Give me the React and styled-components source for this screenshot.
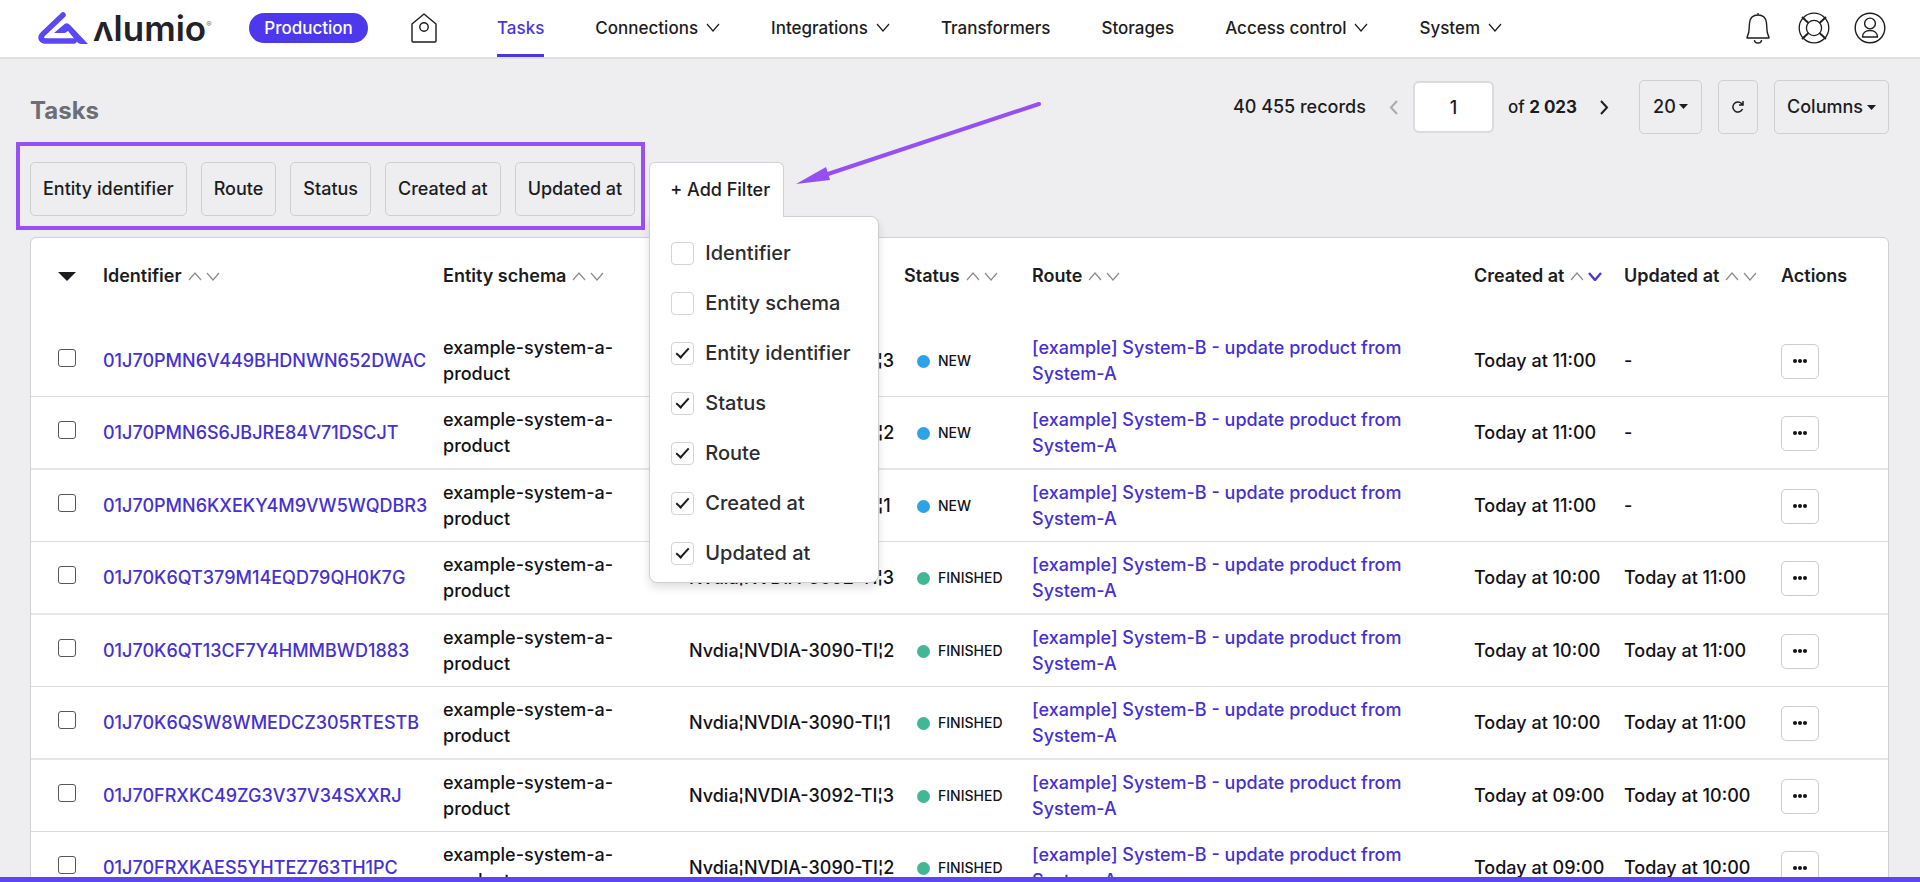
import React from 'react';
import styled, { createGlobalStyle } from 'styled-components';

const GlobalStyle = createGlobalStyle`
  *, *::before, *::after {
    box-sizing: border-box;
  }

  body {
    margin: 0;
    background: #eeeef1;
    color: #1c1c21;
    font-family: Inter, "Liberation Sans", sans-serif;
    font-size: 18px;
    font-weight: 500;
    line-height: 26px;
  }

  button, input, select {
    font: inherit;
    color: inherit;
  }

  a {
    color: #4531d0;
    text-decoration: none;
  }
`;

const navItems = [
  { label: 'Tasks', active: true },
  { label: 'Connections', menu: true },
  { label: 'Integrations', menu: true },
  { label: 'Transformers' },
  { label: 'Storages' },
  { label: 'Access control', menu: true },
  { label: 'System', menu: true },
];

const activeFilters = ['Entity identifier', 'Route', 'Status', 'Created at', 'Updated at'];

const filterOptions = [
  { label: 'Identifier', checked: false },
  { label: 'Entity schema', checked: false },
  { label: 'Entity identifier', checked: true },
  { label: 'Status', checked: true },
  { label: 'Route', checked: true },
  { label: 'Created at', checked: true },
  { label: 'Updated at', checked: true },
];

const columns = [
  { label: 'Identifier', width: 340 },
  { label: 'Entity schema', width: 246 },
  { label: 'Entity identifier', width: 215 },
  { label: 'Status', width: 128 },
  { label: 'Route' },
  { label: 'Created at', width: 150, sorted: 'desc' },
  { label: 'Updated at', width: 157 },
];

const tasks = [
  { id: '01J70PMN6V449BHDNWN652DWAC', entity: 'Nvdia¦NVDIA-3092-TI¦3', status: 'NEW', created: '11:00' },
  { id: '01J70PMN6S6JBJRE84V71DSCJT', entity: 'Nvdia¦NVDIA-3090-TI¦2', status: 'NEW', created: '11:00' },
  { id: '01J70PMN6KXEKY4M9VW5WQDBR3', entity: 'Nvdia¦NVDIA-3090-TI¦1', status: 'NEW', created: '11:00' },
  { id: '01J70K6QT379M14EQD79QH0K7G', entity: 'Nvdia¦NVDIA-3092-TI¦3', status: 'FINISHED', created: '10:00', updated: '11:00' },
  { id: '01J70K6QT13CF7Y4HMMBWD1883', entity: 'Nvdia¦NVDIA-3090-TI¦2', status: 'FINISHED', created: '10:00', updated: '11:00' },
  { id: '01J70K6QSW8WMEDCZ305RTESTB', entity: 'Nvdia¦NVDIA-3090-TI¦1', status: 'FINISHED', created: '10:00', updated: '11:00' },
  { id: '01J70FRXKC49ZG3V37V34SXXRJ', entity: 'Nvdia¦NVDIA-3092-TI¦3', status: 'FINISHED', created: '09:00', updated: '10:00' },
  { id: '01J70FRXKAES5YHTEZ763TH1PC', entity: 'Nvdia¦NVDIA-3090-TI¦2', status: 'FINISHED', created: '09:00', updated: '10:00' },
];

const Page = styled.div`
  height: 100vh;
  overflow: hidden;
`;

const Header = styled.header`
  display: flex;
  align-items: center;
  height: 59px;
  padding: 0 34px 2px 38px;
  background: #fff;
  border-bottom: 2px solid #e0e0e3;
  font-size: 17px;
`;

const Brand = styled.a`
  display: flex;
  align-items: center;
  gap: 5px;
  width: 211px;
  color: #232227;
`;

const Wordmark = styled.span`
  font-size: 35px;
  font-weight: 600;
  line-height: 34px;

  sup {
    font-size: 8px;
    line-height: 8px;
    vertical-align: 14px;
    color: #77777c;
  }
`;

const Environment = styled.span`
  width: 119px;
  border-radius: 15px;
  background: #4d38ee;
  color: #fff;
  text-align: center;
  line-height: 30px;
`;

const HomeLink = styled.a`
  display: flex;
  margin: 0 60px 0 43px;
`;

const Nav = styled.nav`
  display: flex;
  gap: 51px;
  align-self: stretch;
`;

const NavLink = styled.a`
  display: flex;
  align-items: center;
  gap: 8px;
  margin-bottom: -2px;
  padding-bottom: 2px;
  color: ${({ $active }) => ($active ? '#4a37dc' : '#1c1c21')};
  box-shadow: ${({ $active }) => ($active ? 'inset 0 -3px #4a37dc' : 'none')};
  white-space: nowrap;
`;

const HeaderTools = styled.div`
  display: flex;
  align-items: center;
  gap: 24px;
  margin-left: auto;
`;

const IconButton = styled.button`
  display: flex;
  padding: 0;
  border: 0;
  background: none;
`;

const Main = styled.main`
  padding: 21px 31px 0 30px;
`;

const TitleRow = styled.div`
  display: flex;
  justify-content: space-between;
  align-items: flex-start;
  height: 82px;
`;

const Title = styled.h1`
  margin: 16px 0 0;
  color: #6b6e74;
  font-size: 24px;
  font-weight: 700;
  line-height: 30px;
`;

const Pager = styled.div`
  display: flex;
  align-items: center;
`;

const PageCount = styled.span`
  font-size: 17px;
`;

const PageStep = styled(IconButton)`
  margin: 0 ${({ $after }) => $after}px 0 ${({ $before }) => $before}px;
  color: ${({ disabled }) => (disabled ? '#a9a9ae' : '#1c1c21')};
`;

const PageInput = styled.input`
  width: 81px;
  height: 52px;
  margin-right: 14px;
  border: 2px solid #dbdbde;
  border-radius: 6px;
  background: #fff;
  text-align: center;
`;

const OutlineButton = styled.button`
  display: flex;
  align-items: center;
  justify-content: center;
  gap: 4px;
  height: 54px;
  padding: 0 12px;
  border: 1px solid #cfcfd3;
  border-radius: 5px;
  background: none;
  white-space: nowrap;
`;

const RefreshButton = styled(OutlineButton)`
  width: 40px;
  margin: 0 16px;
  padding: 0;
`;

const PageSize = styled.div`
  position: relative;

  select {
    display: block;
    width: 63px;
    height: 54px;
    padding: 0 13px;
    border: 1px solid #cfcfd3;
    border-radius: 5px;
    background: none;
    appearance: none;
  }

  svg {
    position: absolute;
    right: 14px;
    top: 24px;
    pointer-events: none;
  }
`;

const FilterBar = styled.div`
  display: flex;
  gap: 14px;
  height: 75px;
`;

const FilterGroup = styled.div`
  position: relative;
  display: flex;
  align-self: flex-start;
  gap: 14px;

  &::before {
    content: '';
    position: absolute;
    inset: -20px -10px -14px -14px;
    border: 4px solid #9650f5;
    pointer-events: none;
  }
`;

const AddFilter = styled.div`
  position: relative;
  z-index: 1;
  align-self: flex-start;
`;

const AddFilterButton = styled.button`
  position: relative;
  z-index: 1;
  display: block;
  height: 55px;
  padding: 0 13px 0 20px;
  border: 1px solid #d2d2d6;
  border-bottom: 0;
  border-radius: 6px 6px 0 0;
  background: #fff;
  white-space: nowrap;
`;

const FilterMenu = styled.div`
  position: absolute;
  top: 54px;
  left: 0;
  display: grid;
  gap: 24px;
  width: 230px;
  padding: 23px 21px 16px;
  border: 1px solid #cfcfd3;
  border-radius: 0 8px 8px 8px;
  background: #fff;
  box-shadow: 0 5px 8px rgba(0, 0, 0, 0.12);
`;

const FilterOption = styled.label`
  display: flex;
  align-items: center;
  gap: 11px;
  color: #2c2c31;
  font-size: 20px;
  white-space: nowrap;
`;

const OptionBox = styled.input`
  display: grid;
  place-items: center;
  flex: none;
  width: 23px;
  height: 23px;
  margin: 0;
  border: 1px solid #d4d4d8;
  border-radius: 4px;
  background: #fff;
  appearance: none;

  &:checked::before {
    content: '';
    width: 7px;
    height: 13px;
    margin-bottom: 3px;
    border: solid #1c1c21;
    border-width: 0 2px 2px 0;
    transform: rotate(42deg);
  }
`;

const Card = styled.div`
  border: 1px solid #d0d0d4;
  border-radius: 6px;
  background: #fff;
`;

const Table = styled.table`
  width: 100%;
  border-collapse: separate;
  border-spacing: 0;
  table-layout: fixed;

  th {
    padding: 25px 0 36px;
    font-weight: 600;
    text-align: left;
    white-space: nowrap;
  }

  td {
    padding: 10px 0 9px;
    border-bottom: 1px solid #dcdce0;
    color: #121216;
  }

  tr:nth-child(even) td {
    border-bottom: 2px solid #e6e6e9;
  }

  td:first-child,
  th:first-child {
    padding-left: 27px;
  }
`;

const HeaderCell = styled.span`
  display: flex;
  align-items: center;
  gap: 6px;
`;

const RowCheckbox = styled.input`
  display: block;
  width: 18px;
  height: 18px;
  margin: 0 0 6px;
  border: 1px solid #55555c;
  border-radius: 3px;
  appearance: none;
`;

const Status = styled.span`
  display: flex;
  align-items: center;
  gap: 8px;
  padding-left: 13px;
  font-size: 14px;

  &::before {
    content: '';
    width: 13px;
    height: 13px;
    border-radius: 50%;
    background: ${({ $status }) => ($status === 'NEW' ? '#2ea3e3' : '#43b795')};
  }
`;

const SchemaText = styled.div`
  width: 180px;
`;

const MoreButton = styled.button`
  display: grid;
  place-items: center;
  width: 38px;
  height: 35px;
  padding: 0;
  border: 1px solid #cbcbd0;
  border-radius: 5px;
  background: #fff;
`;

const Arrow = styled.svg`
  position: absolute;
  left: 147px;
  top: -62px;
  pointer-events: none;
`;

const BottomBar = styled.div`
  position: fixed;
  inset: auto 0 0;
  height: 5px;
  background: #5c46f2;
`;

const LogoMark = () => (
  <svg width="50" height="34" viewBox="0 0 50 34" aria-hidden="true">
    <path
      d="M25 4 5 23C1 27 4 30 8 30H36"
      fill="none"
      stroke="#5b48f5"
      strokeWidth="5.5"
      strokeLinecap="round"
      strokeLinejoin="round"
    />
    <path d="M16 22 26 13.5Q29 11 32 14L50 33H43Q41 33 39 31L30 20 27 22Z" fill="#5b48f5" />
  </svg>
);

const HomeIcon = () => (
  <svg width="26" height="30" viewBox="0 0 26 30" fill="none" stroke="#1c1c21" strokeWidth="1.4" aria-hidden="true">
    <path d="M13 1 1 11v17q0 1 1 1h22q1 0 1-1V11Z" strokeLinejoin="round" />
    <circle cx="13" cy="14" r="4.2" />
  </svg>
);

const BellIcon = () => (
  <svg width="32" height="32" viewBox="0 0 32 32" fill="none" stroke="#1c1c21" strokeWidth="1.4" aria-hidden="true">
    <path d="M16 1v2M16 3C11 3 8 6 7.500 11L7 18C7 22 5 24 5 26H27C27 24 25 22 25 18L24.500 11C24 6 21 3 16 3Z" strokeLinejoin="round" />
    <path d="M12.500 28c0 4 7 4 7 0" />
  </svg>
);

const HelpIcon = () => (
  <svg width="32" height="32" viewBox="0 0 32 32" fill="none" stroke="#1c1c21" strokeWidth="1.3" aria-hidden="true">
    <circle cx="16" cy="16" r="14.8" />
    <circle cx="16" cy="16" r="7.600" />
    <path d="m4 5 6.500 6M4 27l6.500-6M28 5l-6.500 6M28 27l-6.500-6" strokeWidth="1.8" />
  </svg>
);

const UserIcon = () => (
  <svg width="32" height="32" viewBox="0 0 32 32" fill="none" stroke="#1c1c21" strokeWidth="1.4" aria-hidden="true">
    <circle cx="16" cy="16" r="14.8" />
    <circle cx="16" cy="11.5" r="5.4" />
    <path d="M8.500 25c0-4 3-6.500 7.500-6.500s7.500 2.500 7.500 6.500Z" strokeLinejoin="round" />
  </svg>
);

const Chevron = ({ up, active }) => (
  <svg width="14" height="9" viewBox="0 0 14 9" fill="none" aria-hidden="true">
    <path
      d={up ? 'M1 8 7 1l6 7' : 'm1 1 6 7 6-7'}
      stroke={active || 'currentColor'}
      strokeWidth={active ? 2.4 : 1.2}
    />
  </svg>
);

const SortIcons = styled.span`
  display: flex;
  gap: 4px;
  color: #8b8b90;
`;

const SideChevron = ({ left }) => (
  <svg width="10" height="15" viewBox="0 0 10 15" fill="none" stroke="currentColor" strokeWidth="2" aria-hidden="true">
    <path d={left ? 'M8 1 2 7.5 8 14' : 'm2 1 6 6.5L2 14'} />
  </svg>
);

const Caret = ({ width = 9, height = 5 }) => (
  <svg width={width} height={height} viewBox="0 0 10 6" preserveAspectRatio="none" fill="currentColor" aria-hidden="true">
    <path d="M0 0h10L5 6Z" />
  </svg>
);

const RefreshIcon = () => (
  <svg width="12" height="12" viewBox="0 0 12 12" fill="none" stroke="#1c1c21" strokeWidth="1.5" aria-hidden="true">
    <path d="M10.5 8A5 5 0 1 1 9.5 2.5L11 4M11 0v4H7" />
  </svg>
);

const DotsIcon = () => (
  <svg width="14" height="4" viewBox="0 0 14 4" fill="#121216" aria-hidden="true">
    <circle cx="2" cy="2" r="2" />
    <circle cx="7" cy="2" r="2" />
    <circle cx="12" cy="2" r="2" />
  </svg>
);

const TopBar = () => (
  <Header>
    <Brand href="#">
      <LogoMark />
      <Wordmark>ʌlumio<sup>®</sup></Wordmark>
    </Brand>
    <Environment>Production</Environment>
    <HomeLink href="#" aria-label="Home"><HomeIcon /></HomeLink>
    <Nav>
      {navItems.map((item) => (
        <NavLink key={item.label} href="#" $active={item.active}>
          {item.label}
          {item.menu && <Chevron />}
        </NavLink>
      ))}
    </Nav>
    <HeaderTools>
      <IconButton aria-label="Notifications"><BellIcon /></IconButton>
      <IconButton aria-label="Help"><HelpIcon /></IconButton>
      <IconButton aria-label="Account"><UserIcon /></IconButton>
    </HeaderTools>
  </Header>
);

const Pagination = () => (
  <Pager>
    <span>40 455 records</span>
    <PageStep $before={23} $after={14} disabled aria-label="Previous page"><SideChevron left /></PageStep>
    <PageInput aria-label="Page" defaultValue="1" />
    <PageCount>of <strong>2 023</strong></PageCount>
    <PageStep $before={22} $after={30} aria-label="Next page"><SideChevron /></PageStep>
    <PageSize>
      <select aria-label="Records per page" defaultValue="20">
        <option>20</option>
        <option>50</option>
      </select>
      <Caret />
    </PageSize>
    <RefreshButton aria-label="Refresh"><RefreshIcon /></RefreshButton>
    <OutlineButton>Columns<Caret /></OutlineButton>
  </Pager>
);

const Filters = () => (
  <FilterBar>
    <FilterGroup>
      {activeFilters.map((label) => (
        <OutlineButton key={label}>{label}</OutlineButton>
      ))}
    </FilterGroup>
    <AddFilter>
      <AddFilterButton>+ Add Filter</AddFilterButton>
      <FilterMenu>
        {filterOptions.map((option) => (
          <FilterOption key={option.label}>
            <OptionBox type="checkbox" defaultChecked={option.checked} />
            {option.label}
          </FilterOption>
        ))}
      </FilterMenu>
      <Arrow width="248" height="86" viewBox="0 0 248 86" aria-hidden="true">
        <path d="M243 4 32 74" stroke="#9450f3" strokeWidth="4" strokeLinecap="round" />
        <path d="M0 84 30 67 34 80Z" fill="#9450f3" />
      </Arrow>
    </AddFilter>
  </FilterBar>
);

const TaskTable = () => (
  <Card>
    <Table>
      <colgroup>
        <col width="72" />
        {columns.map((column) => (
          <col key={column.label} width={column.width} />
        ))}
        <col width="107" />
      </colgroup>
      <thead>
        <tr>
          <th>
            <IconButton aria-label="Selection menu"><Caret width={18} height={9} /></IconButton>
          </th>
          {columns.map((column) => (
            <th key={column.label}>
              <HeaderCell>
                {column.label}
                <SortIcons>
                  <Chevron up />
                  <Chevron active={column.sorted === 'desc' && '#4a37dc'} />
                </SortIcons>
              </HeaderCell>
            </th>
          ))}
          <th>Actions</th>
        </tr>
      </thead>
      <tbody>
        {tasks.map((task) => (
          <tr key={task.id}>
            <td><RowCheckbox type="checkbox" aria-label={`Select ${task.id}`} /></td>
            <td><a href="#">{task.id}</a></td>
            <td><SchemaText>example-system-a-product</SchemaText></td>
            <td>{task.entity}</td>
            <td><Status $status={task.status}>{task.status}</Status></td>
            <td><a href="#">[example] System-B - update product from System-A</a></td>
            <td>Today at {task.created}</td>
            <td>{task.updated ? `Today at ${task.updated}` : '-'}</td>
            <td><MoreButton aria-label="More actions"><DotsIcon /></MoreButton></td>
          </tr>
        ))}
      </tbody>
    </Table>
  </Card>
);

const App = () => {
  return (
    <Page>
      <GlobalStyle />
      <TopBar />
      <Main>
        <TitleRow>
          <Title>Tasks</Title>
          <Pagination />
        </TitleRow>
        <Filters />
        <TaskTable />
      </Main>
      <BottomBar />
    </Page>
  );
}

export default App;
